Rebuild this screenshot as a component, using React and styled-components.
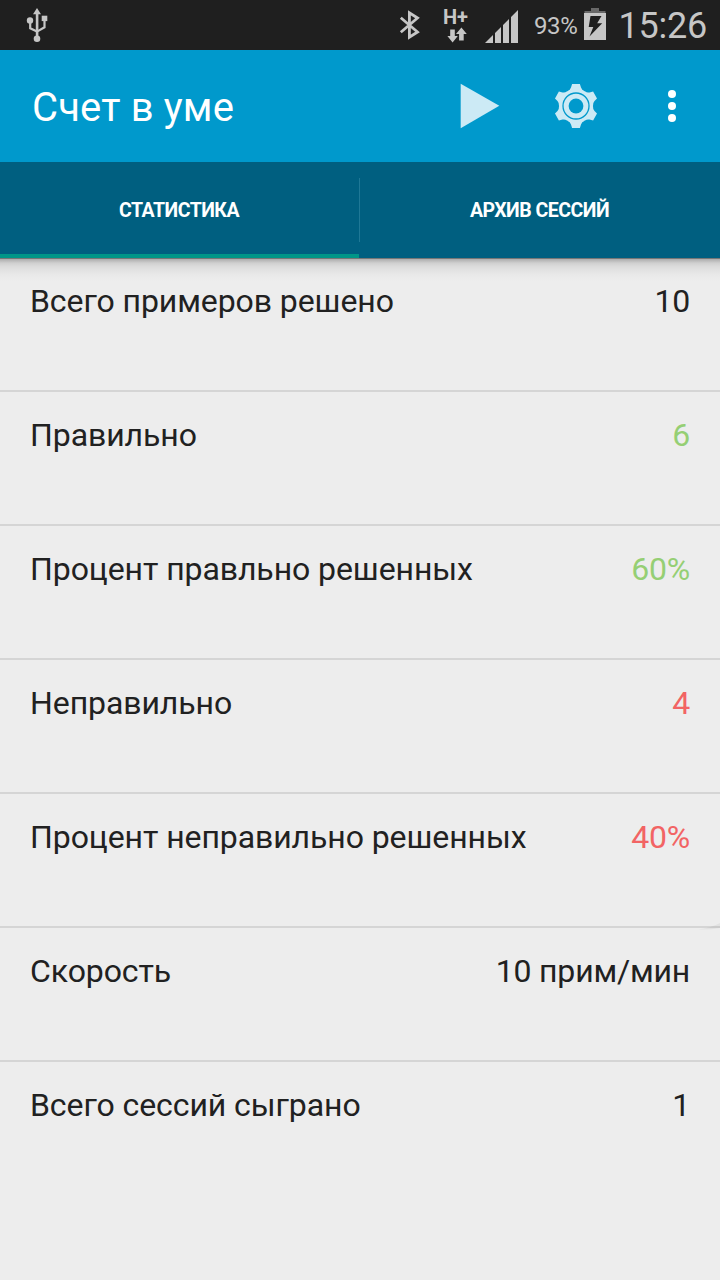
import React from 'react';
import styled, { createGlobalStyle } from 'styled-components';

const GlobalStyle = createGlobalStyle`
  * { box-sizing: border-box; }
  body { margin: 0; background: #ededed; font-family: Roboto, "Noto Sans", sans-serif; }
  svg { display: block; flex: none; }
`;

const Screen = styled.div`
  width: 720px;
  height: 1280px;
  overflow: hidden;
  display: flex;
  flex-direction: column;
  background: #ededed;
`;

const StatusBar = styled.header`
  height: 50px;
  flex: none;
  display: flex;
  align-items: center;
  background: #1f1f1f;
  color: #c6c6c6;
  padding: 0 13px 0 24px;
`;

const StatusIcons = styled.div`
  margin-left: auto;
  display: flex;
  align-items: center;
`;

const Battery = styled.span`
  font-size: 24px;
  line-height: 50px;
  width: 50px;
  padding-top: 2px;
  white-space: nowrap;
  letter-spacing: -0.4px;
`;

const Clock = styled.span`
  font-size: 36px;
  line-height: 50px;
  width: 101px;
  padding-top: 2px;
  text-align: right;
  white-space: nowrap;
  letter-spacing: -0.25px;
`;

const AppBar = styled.div`
  height: 112px;
  flex: none;
  display: flex;
  align-items: center;
  background: #0099cc;
  padding-left: 32px;
`;

const Title = styled.h1`
  margin: 0;
  flex: 1;
  color: #fff;
  font-size: 40px;
  font-weight: 400;
  line-height: 48px;
  padding-top: 4px;
  letter-spacing: 0.15px;
  white-space: nowrap;
`;

const Action = styled.button`
  width: 96px;
  height: 112px;
  border: 0;
  padding: 0;
  background: none;
  display: flex;
  align-items: center;
  justify-content: center;
`;

const Tabs = styled.nav`
  height: 96px;
  flex: none;
  display: grid;
  grid-template-columns: 359px 1px 360px;
  align-items: center;
  background: #005f80;
`;

const Tab = styled.div`
  height: 96px;
  display: flex;
  align-items: center;
  justify-content: center;
  border-bottom: 4px solid ${(p) => (p.$active ? '#009688' : 'transparent')};
  padding-top: 5px;
  padding-right: 1px;
  color: #fff;
  font-size: 19.5px;
  line-height: 23px;
  font-weight: 700;
  white-space: nowrap;
  letter-spacing: -0.5px;
`;

const TabDivider = styled.div`
  width: 1px;
  height: 64px;
  background: #1f7896;
`;

const List = styled.main`
  flex: 1;
  position: relative;
  background: linear-gradient(to bottom,
    #777 0, #777 1px, #adadad 1px, #bdbdbd 3px, #cfcfcf 5px,
    #dadada 8px, #e2e2e2 12px, #e9e9e9 17px, #ededed 23px);
`;

const Row = styled.div`
  height: 134px;
  display: flex;
  justify-content: space-between;
  padding: 24px 30px 0;
  border-bottom: 2px solid ${(p) => (p.$last ? 'transparent' : '#d5d5d5')};
  color: #212121;
  font-size: 32px;
  line-height: 38px;
  letter-spacing: -0.08px;
  white-space: nowrap;
`;

const Value = styled.span`
  color: ${(p) => p.$color || '#212121'};
  letter-spacing: -0.2px;
`;

const CornerMark = styled.svg`
  position: absolute;
  right: 0;
  top: 664px;
`;

const UsbIcon = () => (
  <svg width="26" height="36" viewBox="24 7 26 36" fill="#c6c6c6">
    <path d="M37 8l4 6.300h-2.600V36h-2.600V14.300H33z" />
    <circle cx="30" cy="20.500" r="3.200" />
    <rect x="41.700" y="15.700" width="5.600" height="5.400" />
    <circle cx="37" cy="38.800" r="3.300" />
    <path d="M30.200 22v6.200l6.800 3.400 7.500-4.300V20" fill="none" stroke="#c6c6c6" strokeWidth="2.200" />
  </svg>
);

const BluetoothIcon = () => (
  <svg width="24" height="50" viewBox="398 0 24 50" fill="none" stroke="#c6c6c6" strokeWidth="2.800">
    <path d="M400.800 17.800L417.500 32 409.400 37.200V12.800L417.500 18 400.800 32.200" />
  </svg>
);

const NetLabel = styled.span`
  display: block;
  height: 18px;
  font-size: 20px;
  line-height: 18px;
  font-weight: 700;
  white-space: nowrap;
`;

const Network = styled.div`
  width: 27px;
  height: 50px;
  margin-left: 21px;
  padding-top: 8px;
`;

const ArrowsIcon = () => (
  <svg width="27" height="17" viewBox="443 26 27 17" fill="#c6c6c6">
    <path d="M450.200 29.500h4.600v6.500h3l-5.200 6.500-5.200-6.500h2.800zM459.100 40.500v-6.500h-3.100l5.400-6.500 5.400 6.500h-3.100v6.500z" />
  </svg>
);

const SignalIcon = () => (
  <svg width="34" height="50" viewBox="485 0 34 50" fill="#c6c6c6">
    <path d="M485 43l8-8v8zM495 43V33l6-6v16zM503 43V25l6-6v24zM511 43V17l7-7v33z" />
  </svg>
);

const BatteryIcon = () => (
  <svg width="22" height="50" viewBox="584 0 22 50">
    <path d="M591 8h8v3h6.500v2.500h-21V11h6.500z" fill="#686868" />
    <rect x="584" y="13" width="22" height="27" fill="#c6c6c6" />
    <path d="M590.500 16h11l-4.300 7.300h5L589.500 36.500l3.800-9.500h-4.600z" fill="#1f1f1f" />
  </svg>
);

const PlayIcon = () => (
  <svg width="40" height="46" viewBox="0 0 40 46">
    <path d="M0.700 0.800L39.300 22.800 0.700 45.200z" fill="#cceaf5" />
  </svg>
);

const GearIcon = () => (
  <svg width="48" height="48" viewBox="-24 -24 48 48">
    <g fill="#cceaf5">
      <circle r="17" />
      {[0, 60, 120, 180, 240, 300].map((a) => (
        <path key={a} transform={`rotate(${a})`} d="M-3.900-22H3.900L5-18.500Q5.800-16 8.500-14.700L0-10-8.500-14.700Q-5.800-16-5-18.500z" />
      ))}
    </g>
    <circle r="13" fill="none" stroke="#0099cc" strokeWidth="1.300" />
    <circle r="7.400" fill="#0099cc" />
  </svg>
);

const MoreIcon = () => (
  <svg width="8" height="32" viewBox="0 0 8 32" fill="#fff">
    <circle cx="4" cy="4" r="4" />
    <circle cx="4" cy="16" r="4" />
    <circle cx="4" cy="28" r="4" />
  </svg>
);

const GREEN = '#95cf74';
const RED = '#f26464';

const STATS = [
  { label: 'Всего примеров решено', value: '10' },
  { label: 'Правильно', value: '6', color: GREEN },
  { label: 'Процент правльно решенных', value: '60%', color: GREEN },
  { label: 'Неправильно', value: '4', color: RED },
  { label: 'Процент неправильно решенных', value: '40%', color: RED },
  { label: 'Скорость', value: '10 прим/мин' },
  { label: 'Всего сессий сыграно', value: '1' },
];

const Signal = styled.div`
  margin: 0 15px 0 15px;
`;

export default function App() {
  return (
    <Screen>
      <GlobalStyle />
      <StatusBar>
        <UsbIcon />
        <StatusIcons>
          <BluetoothIcon />
          <Network>
            <NetLabel>H+</NetLabel>
            <ArrowsIcon />
          </Network>
          <Signal><SignalIcon /></Signal>
          <Battery>93%</Battery>
          <BatteryIcon />
          <Clock>15:26</Clock>
        </StatusIcons>
      </StatusBar>
      <AppBar>
        <Title>Счет в уме</Title>
        <Action aria-label="Play"><PlayIcon /></Action>
        <Action aria-label="Settings"><GearIcon /></Action>
        <Action aria-label="More"><MoreIcon /></Action>
      </AppBar>
      <Tabs>
        <Tab $active>СТАТИСТИКА</Tab>
        <TabDivider />
        <Tab>АРХИВ СЕССИЙ</Tab>
      </Tabs>
      <List>
        {STATS.map((s, i) => (
          <Row key={s.label} $last={i === STATS.length - 1}>
            <span>{s.label}</span>
            <Value $color={s.color}>{s.value}</Value>
          </Row>
        ))}
        <CornerMark width="22" height="10" viewBox="0 0 22 10">
          <path d="M0 7.500Q12 6 22 1V6Q12 8 0 7.500z" fill="#000" opacity="0.045" />
        </CornerMark>
      </List>
    </Screen>
  );
}
